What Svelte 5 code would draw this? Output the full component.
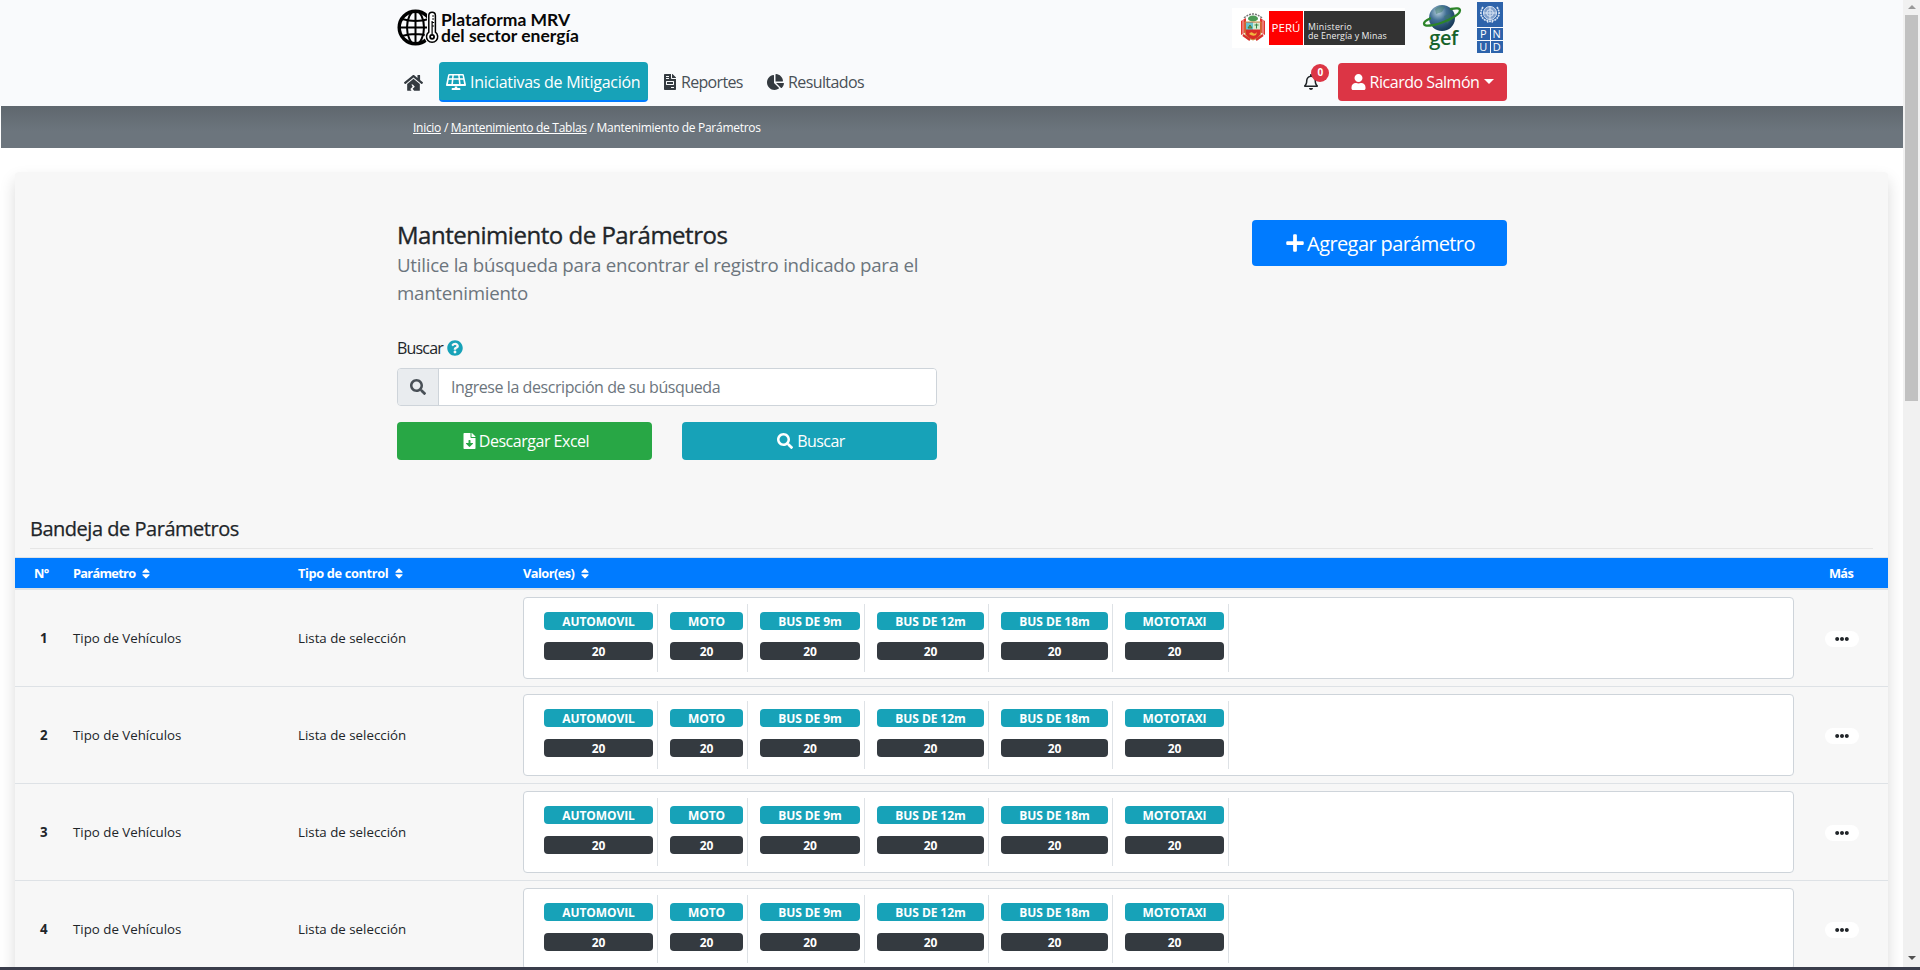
<script>
  const icons = {
    search: ['0 0 512 512', 'M505 442.7L405.3 343c-4.5-4.5-10.6-7-17-7H372c27.6-35.3 44-79.7 44-128C416 93.1 322.9 0 208 0S0 93.1 0 208s93.1 208 208 208c48.3 0 92.7-16.4 128-44v16.3c0 6.4 2.5 12.5 7 17l99.7 99.7c9.4 9.4 24.6 9.4 33.9 0l28.3-28.3c9.4-9.4 9.4-24.6.1-34zM208 336c-70.7 0-128-57.2-128-128 0-70.7 57.2-128 128-128 70.7 0 128 57.2 128 128 0 70.7-57.2 128-128 128z'],
    user: ['0 0 448 512', 'M224 256c70.7 0 128-57.3 128-128S294.7 0 224 0 96 57.3 96 128s57.3 128 128 128zm89.6 32h-16.7c-22.2 10.2-46.9 16-72.9 16s-50.6-5.8-72.9-16h-16.7C60.2 288 0 348.2 0 422.4V464c0 26.5 21.5 48 48 48h352c26.5 0 48-21.5 48-48v-41.6c0-74.2-60.2-134.4-134.4-134.4z'],
    plus: ['0 0 448 512', 'M416 208H272V64c0-17.67-14.33-32-32-32h-32c-17.67 0-32 14.33-32 32v144H32c-17.67 0-32 14.33-32 32v32c0 17.67 14.33 32 32 32h144v144c0 17.67 14.33 32 32 32h32c17.67 0 32-14.33 32-32V304h144c17.67 0 32-14.33 32-32v-32c0-17.67-14.33-32-32-32z'],
    sort: ['0 0 320 512', 'M41 288h238c21.4 0 32.1 25.9 17 41L177 448c-9.4 9.4-24.6 9.4-33.9 0L24 329c-15.1-15.1-4.4-41 17-41zm255-105L177 64c-9.4-9.4-24.6-9.4-33.9 0L24 183c-15.1 15.1-4.4 41 17 41h238c21.4 0 32.1-25.9 17-41z'],
    question: ['0 0 512 512', 'M504 256c0 136.997-111.043 248-248 248S8 392.997 8 256C8 119.083 119.043 8 256 8s248 111.083 248 248zM262.655 90c-54.497 0-89.255 22.957-116.549 63.758-3.536 5.286-2.353 12.415 2.715 16.258l34.699 26.31c5.205 3.947 12.621 3.008 16.665-2.122 17.864-22.658 30.113-35.797 57.303-35.797 20.429 0 45.698 13.148 45.698 32.958 0 14.976-12.363 22.667-32.534 33.976C247.128 238.528 216 254.941 216 296v4c0 6.627 5.373 12 12 12h56c6.627 0 12-5.373 12-12v-1.333c0-28.462 83.186-29.647 83.186-106.667 0-58.002-60.165-102-116.531-102zM256 338c-25.365 0-46 20.635-46 46 0 25.364 20.635 46 46 46s46-20.636 46-46c0-25.365-20.635-46-46-46z'],
    pie: ['0 0 544 512', 'M527.79 288H290.5l158.03 158.03c6.04 6.04 15.98 6.53 22.19.68 38.7-36.46 65.32-85.61 73.13-140.86 1.34-9.46-6.51-17.85-16.06-17.85zm-15.83-64.8C503.72 103.74 408.26 8.28 288.8.04 279.68-.59 272 7.1 272 16.24V240h223.77c9.14 0 16.82-7.68 16.19-16.8zM224 288V50.71c0-9.55-8.39-17.4-17.84-16.06C86.99 51.49-4.1 155.6.14 280.37 4.5 408.51 114.83 513.59 243.03 511.98c50.4-.63 96.97-16.87 135.26-44.03 7.9-5.6 8.42-17.23 1.57-24.08L224 288z'],
    bell: ['0 0 448 512', 'M439.39 362.29c-19.32-20.76-55.47-51.99-55.47-154.29 0-77.7-54.48-139.9-127.94-155.16V32c0-17.67-14.32-32-31.98-32s-31.98 14.33-31.98 32v20.84C118.56 68.1 64.08 130.3 64.08 208c0 102.3-36.15 133.53-55.47 154.29-6 6.45-8.66 14.16-8.61 21.71.11 16.4 12.98 32 32.1 32h383.8c19.12 0 32-15.6 32.1-32 .05-7.55-2.61-15.27-8.61-21.71zM67.53 368c21.22-27.97 44.42-74.33 44.53-159.42 0-.2-.06-.38-.06-.58 0-61.86 50.14-112 112-112s112 50.14 112 112c0 .2-.06.38-.06.58.11 85.1 23.31 131.46 44.53 159.42H67.53zM224 512c35.32 0 63.97-28.65 63.97-64H160.03c0 35.35 28.65 64 63.97 64z'],
    invoice: ['0 0 384 512', 'M288 256H96v64h192v-64zm89-151L279.1 7c-4.5-4.5-10.6-7-17-7H256v128h128v-6.100c0-6.300-2.500-12.400-7-16.900zm-153 31V0H24C10.700 0 0 10.700 0 24v464c0 13.300 10.700 24 24 24h336c13.300 0 24-10.700 24-24V160H248c-13.200 0-24-10.800-24-24zM64 72c0-4.420 3.580-8 8-8h80c4.420 0 8 3.580 8 8v16c0 4.420-3.580 8-8 8H72c-4.420 0-8-3.580-8-8V72zm0 64c0-4.420 3.580-8 8-8h80c4.420 0 8 3.580 8 8v16c0 4.420-3.580 8-8 8H72c-4.420 0-8-3.580-8-8v-16zm256 304c0 4.420-3.580 8-8 8h-80c-4.420 0-8-3.580-8-8v-16c0-4.420 3.580-8 8-8h80c4.420 0 8 3.580 8 8v16zm0-200v96c0 8.840-7.160 16-16 16H80c-8.840 0-16-7.160-16-16v-96c0-8.840 7.160-16 16-16h224c8.840 0 16 7.160 16 16z'],
    download: ['0 0 384 512', 'M224 136V0H24C10.700 0 0 10.700 0 24v464c0 13.300 10.700 24 24 24h336c13.300 0 24-10.700 24-24V160H248c-13.200 0-24-10.800-24-24zm76.450 211.360l-96.420 95.700c-6.650 6.610-17.390 6.610-24.040 0l-96.420-95.700C73.420 337.290 80.540 320 94.820 320H160v-80c0-8.840 7.160-16 16-16h32c8.840 0 16 7.160 16 16v80h65.180c14.280 0 21.400 17.290 11.270 27.360zM377 105L279.100 7c-4.500-4.500-10.600-7-17-7H256v128h128v-6.100c0-6.300-2.500-12.400-7-16.900z'],
    dots: ['0 0 512 512', 'M328 256c0 39.800-32.200 72-72 72s-72-32.200-72-72 32.200-72 72-72 72 32.200 72 72zm104-72c-39.800 0-72 32.200-72 72s32.200 72 72 72 72-32.200 72-72-32.200-72-72-72zm-352 0c-39.800 0-72 32.200-72 72s32.200 72 72 72 72-32.200 72-72-32.200-72-72-72z'],
    house: ['0 0 576 512', 'M280 149L96 300v188c0 9 7 16 16 16h116l-36-54 70-62-38-72h44l60 72-66 58 44 58h158c9 0 16-7 16-16V300L296 149c-5-4-11-4-16 0zM571 251l-83-69V44c0-7-5-12-12-12h-56c-7 0-12 5-12 12v72l-89-74c-18-14-44-14-62 0L5 251c-5 4-6 12-2 17l26 31c4 5 12 6 17 2L280 109c5-4 11-4 16 0l234 192c5 4 13 3 17-2l26-31c4-5 3-13-2-17z'],
    solar: ['0 0 640 512', 'M432 448h-72v-48h-80v48h-72c-18 0-28 10-28 32v16c0 9 7 16 16 16h248c9 0 16-7 16-16v-16c0-22-10-32-28-32zM573 28C569 12 555 0 539 0H101C85 0 71 12 67 28L1 340c-5 23 11 44 34 44h570c23 0 39-21 34-44L573 28zM390 48l10 88H240l10-88h140zM112 48h90l-10 88H94l18-88zM62 320l24-136h102l-16 136H62zm162 0l12-136h168l12 136H224zM438 48h90l18 88h-98l-10-88zm30 272l-16-136h102l24 136H468z']
  };
  const values = [
    ['AUTOMOVIL', 109], ['MOTO', 73], ['BUS DE 9m', 100],
    ['BUS DE 12m', 107], ['BUS DE 18m', 107], ['MOTOTAXI', 99]
  ];
  const rows = [1, 2, 3, 4];
</script>

{#snippet icon(name, cls = '')}
  <svg class="ic {name} {cls}" viewBox={icons[name][0]} aria-hidden="true"><path fill-rule="evenodd" d={icons[name][1]} /></svg>
{/snippet}

<div class="screen">
  <div class="view">
    <header>
      <div class="container brandrow">
        <div class="brand">
          <svg class="globe" viewBox="0 0 42 37" fill="none" stroke="#000">
            <circle cx="18.500" cy="18.500" r="16.300" stroke-width="3.400" />
            <ellipse cx="18.500" cy="18.500" rx="8.500" ry="16.500" stroke-width="2" />
            <path d="M18.500 2v33M2 18.500h30M5 10q13.500 4 27 0M5 27q13.500-4 27 0" stroke-width="2" />
            <path d="M31.500 6a3.800 3.800 0 0 1 7.600 0v16.500a6.300 6.300 0 1 1-7.600 0z" fill="#f9fafc" stroke="#f9fafc" stroke-width="3" />
            <path d="M31.800 6.500a3.300 3.300 0 0 1 6.600 0v16.700a5.600 5.600 0 1 1-6.600 0z" fill="#fff" stroke-width="1.500" />
            <path d="M35.100 12v13M35.100 7h2M35.100 10h2M35.100 13.500h2M35.100 17h2" stroke-width="1.200" />
            <circle cx="35.100" cy="27.800" r="2" stroke-width="1.800" />
          </svg>
          <div class="brandtext"><span>Plataforma MRV</span><span>del sector energía</span></div>
        </div>
        <div class="logos">
          <div class="peru">
            <svg class="crest" viewBox="0 0 26 30">
              <path d="M4 6Q13-2 22 6" fill="none" stroke="#777" stroke-width="1.500" stroke-dasharray="2 1" />
              <path d="M1 9l5-3v14l-5 3zM25 9l-5-3v14l5 3z" fill="#e3342f" />
              <path d="M3 8v15M23 8v15" stroke="#f6b9b4" stroke-width="1" />
              <ellipse cx="13" cy="6.500" rx="5" ry="3" fill="#4c9a55" />
              <path d="M5 10h16v10q0 5-8 8-8-3-8-8z" fill="#d92b28" stroke="#c8963c" />
              <path d="M6 10.500h7v7H6z" fill="#68c3cf" /><path d="M13 10.500h7v7h-7z" fill="#d5ecd0" />
              <path d="M8 16l2-3 2 3zM16.500 11.500v5M14.500 13h4" stroke="#388444" fill="#b9772d" />
              <path d="M9 22q2-3 4-1t4-1l-1 3q-3 2-7-1z" fill="#f0b63d" />
              <path d="M3 23l7 5M23 23l-7 5" stroke="#d5302c" stroke-width="2.200" />
            </svg>
            <div class="pe">PERÚ</div>
            <div class="min"><span>Ministerio</span><span>de Energía y Minas</span></div>
          </div>
          <div class="gef">
            <svg viewBox="0 0 40 30">
              <defs><radialGradient id="gg" cx=".35" cy=".28" r=".8"><stop offset="0" stop-color="#b8d1de" /><stop offset=".4" stop-color="#416f94" /><stop offset="1" stop-color="#12324f" /></radialGradient></defs>
              <circle cx="20" cy="15" r="13" fill="url(#gg)" />
              <path d="M13 6q5-5 10-2l-3 5-6 2zM22 13l6-2 2 5-5 5z" fill="#3b7867" opacity=".5" />
              <path d="M8 15.500C0 19 0 23.500 8 22.500 18 21.500 38 13 38 7.500 38 5 34 5 29 6" fill="none" stroke="#2c8429" stroke-width="2.300" stroke-linecap="round" />
            </svg>
            <span>gef</span>
          </div>
          <div class="pnud">
            <div class="un"><svg viewBox="0 0 26 24" fill="none" stroke="#dbe6f4" stroke-width="1"><circle cx="13" cy="11" r="6.500" fill="#7f9fcb" /><circle cx="13" cy="11" r="3.300" /><path d="M13 4.500v13M6.500 11h13" /><path d="M6 5q-5 8 2 13l8 2M20 5q5 8-2 13l-8 2" stroke-width="1.700" stroke-dasharray="2 .7" /></svg></div>
            <b>P</b><b>N</b><b>U</b><b>D</b>
          </div>
        </div>
      </div>
      <div class="container navrow">
        <nav>
          <a class="home" href="#top" aria-label="Inicio">{@render icon('house')}</a>
          <a class="active" href="#top">{@render icon('solar')}<span>Iniciativas de Mitigación</span></a>
          <a class="rep" href="#top">{@render icon('invoice')}<span>Reportes</span></a>
          <a class="res" href="#top">{@render icon('pie')}<span>Resultados</span></a>
        </nav>
        <div class="account">
          <div class="notif">{@render icon('bell')}<span class="count">0</span></div>
          <button class="userbtn">{@render icon('user')}<span>Ricardo Salmón</span><i></i></button>
        </div>
      </div>
    </header>

    <div class="crumbs"><div class="container"><a href="#top">Inicio</a> / <a href="#top">Mantenimiento de Tablas</a> / Mantenimiento de Parámetros</div></div>

    <main>
      <div class="container top">
        <div class="left">
          <h1>Mantenimiento de Parámetros</h1>
          <p>Utilice la búsqueda para encontrar el registro indicado para el<br />mantenimiento</p>
          <div class="label"><span>Buscar</span>{@render icon('question')}</div>
          <div class="group"><div class="addon">{@render icon('search')}</div><div class="field"><span>Ingrese la descripción de su búsqueda</span></div></div>
          <div class="btns">
            <button class="green">{@render icon('download')}<span>Descargar Excel</span></button>
            <button class="teal">{@render icon('search')}<span>Buscar</span></button>
          </div>
        </div>
        <button class="add">{@render icon('plus')}<span>Agregar parámetro</span></button>
      </div>

      <h2>Bandeja de Parámetros</h2>
      <div class="thead line">
        <span class="c">N°</span>
        <span class="p">Parámetro {@render icon('sort')}</span>
        <span class="p wide">Tipo de control {@render icon('sort')}</span>
        <span class="v">Valor(es) {@render icon('sort')}</span>
        <span class="m">Más</span>
      </div>
      {#each rows as n}
        <div class="row line">
          <b class="c">{n}</b>
          <span class="p">Tipo de Vehículos</span>
          <span class="p">Lista de selección</span>
          <div class="box">
            {#each values as [name, w]}
              <div class="val"><span class="badge" style="width:{w}px">{name}</span><span class="badge dark" style="width:{w}px">20</span></div>
            {/each}
          </div>
          <div class="m"><span class="pill">{@render icon('dots')}</span></div>
        </div>
      {/each}
    </main>
  </div>
  <div class="scroll"><i class="up"></i><div class="thumb"></div><i class="down"></i></div>
  <div class="strip"></div>
</div>

<style>
  :global(body) { overflow: hidden; background: #fff; }
  .screen { width: 1920px; height: 970px; display: grid; grid-template: 967px 3px / 1903px 17px; overflow: hidden; font-family: "Open Sans", "Noto Sans", sans-serif; font-size: 16px; color: #212529; letter-spacing: -0.03em; }
  .screen * { box-sizing: border-box; }
  span { white-space: nowrap; }
  .view { overflow: hidden; padding-left: 1px; }
  .strip { grid-column: 1 / 3; background: #3a3d4b; }
  .ic { fill: currentColor; display: block; flex: none; }
  a { color: inherit; text-decoration: none; }
  button { font: inherit; letter-spacing: inherit; color: #fff; border: 0; border-radius: 4px; padding: 0; display: flex; align-items: center; justify-content: center; }
  .container { width: 1110px; margin-left: 396px; }
  header { height: 106px; background: #f9fafc; margin-left: -1px; padding-left: 1px; }
  .brandrow { height: 62px; display: flex; justify-content: space-between; }
  .brand { display: flex; padding-top: 9px; }
  .globe { width: 42px; height: 37px; }
  .brandtext { font: 700 17.500px/16px Lato, sans-serif; letter-spacing: 0; color: #080808; display: flex; flex-direction: column; padding: 3px 0 0 2px; }
  .logos { display: flex; }
  .peru { display: flex; background: #fff; margin-top: 8px; height: 40px; padding: 3px 0 3px 9px; }
  .crest { width: 26px; height: 30px; margin: 1px 3px 0 -1px; }
  .pe { width: 34px; height: 34px; background: #f00; color: #fff; font-size: 11.500px; line-height: 34px; text-align: center; letter-spacing: 0; margin-right: 1px; }
  .min { width: 101px; height: 34px; background: #333; color: #eee; font-size: 8.800px; line-height: 9px; letter-spacing: .1px; display: flex; flex-direction: column; padding: 12px 0 0 4px; }
  .min span:first-child { letter-spacing: .3px; }
  .gef { width: 40px; margin-left: 17px; display: flex; flex-direction: column; align-items: center; padding-top: 3px; }
  .gef svg { width: 40px; height: 30px; }
  .gef span { font: 600 20px/22px "Open Sans", sans-serif; letter-spacing: -0.5px; color: #17622b; margin: -6px 0 0 3px; }
  .pnud { margin: 2px 4px 0 15px; width: 26px; height: 51px; display: grid; grid-template: 25px 12px 12px / 12.500px 12.500px; gap: 1px; }
  .un { grid-column: 1 / 3; background: #2d63ab; }
  .pnud b { background: #2d63ab; color: #fff; font: 400 11px/11px "Open Sans", sans-serif; text-align: center; letter-spacing: 0; }
  .navrow { display: flex; justify-content: space-between; height: 40px; }
  nav { display: flex; color: #343a40; }
  nav a { display: flex; align-items: center; height: 40px; }
  .home { width: 42px; padding-left: 7px; }
  .house { width: 19px; height: 17px; }
  .active { width: 209px; background: #17a2b8; color: #fff; border-bottom: 2px solid #007bff; border-radius: 4px; padding: 2px 0 0 7px; letter-spacing: -0.27px; }
  .solar { width: 20px; height: 16px; margin: 0 4px 1px 0; }
  .rep { padding-left: 16px; width: 119px; color: #495057; letter-spacing: -0.68px; }
  .invoice { width: 12px; height: 16px; margin-right: 5px; color: #343a40; }
  .res { color: #495057; letter-spacing: -0.6px; }
  .pie { width: 17px; height: 16px; margin-right: 4px; color: #343a40; }
  .account { display: flex; padding-top: 1px; }
  .notif { position: relative; width: 34px; padding-top: 11px; }
  .bell { width: 14px; height: 16px; }
  .count { position: absolute; left: 7px; top: 1px; width: 18px; height: 18px; border-radius: 50%; background: #dc3545; color: #fff; font-size: 10px; font-weight: 700; line-height: 17px; text-align: center; }
  .userbtn { width: 169px; height: 38px; background: #dc3545; }
  .user { width: 15px; height: 16px; margin-right: 4px; }
  .userbtn i { border: 5px solid transparent; border-top-color: #fff; border-bottom: 0; margin-left: 5px; margin-bottom: 2px; }
  .crumbs { height: 42px; background: linear-gradient(#5f676e, #6c757d 60%); color: #fff; font-size: 12px; line-height: 43px; letter-spacing: -0.28px; }
  .crumbs .container { padding-left: 16px; }
  .crumbs a { text-decoration: underline; }
  main { margin: 24px 0 0 14px; width: 1873px; height: 860px; background: #f7f7f7; border-radius: 4px; box-shadow: 0 8px 16px rgba(0, 0, 0, .15); }
  .top { display: flex; justify-content: space-between; margin-left: 382px; padding-top: 48px; height: 336px; }
  .left { width: 540px; }
  h1 { margin: 0; font-size: 24px; font-weight: 500; line-height: 29px; letter-spacing: -0.48px; -webkit-text-stroke: .35px currentColor; }
  p { margin: 2px 0 0; font-size: 18.700px; line-height: 28px; color: #6c757d; letter-spacing: -0.26px; }
  .label { display: flex; align-items: center; gap: 4px; height: 24px; margin-top: 29px; letter-spacing: -0.8px; }
  .question { width: 16px; height: 16px; color: #17a2b8; }
  .group { display: flex; height: 38px; border: 1px solid #ced4da; border-radius: 4px; margin-top: 8px; overflow: hidden; }
  .addon { width: 41px; background: #e9ecef; border-right: 1px solid #ced4da; display: grid; place-items: center; color: #495057; }
  .search { width: 16px; height: 16px; }
  .field { flex: 1; background: #fff; color: #6c757d; padding-left: 12px; line-height: 36px; letter-spacing: -0.43px; }
  .btns { display: flex; justify-content: space-between; margin-top: 16px; }
  .btns button { width: 255px; height: 38px; }
  .green { background: #28a745; padding-left: 3px; } .teal { background: #17a2b8; padding-left: 3px; }
  .download { width: 13px; height: 16px; margin-right: 3px; } .teal .search { margin-right: 4px; }
  .teal span { letter-spacing: -0.6px; }
  .add { width: 255px; height: 46px; background: #007bff; font-size: 20px; padding-left: 2px; letter-spacing: -0.6px; }
  .plus { width: 18px; height: 20px; margin-right: 3px; }
  h2 { margin: 0 15px 8px; font-size: 20px; font-weight: 500; line-height: 24px; height: 41px; padding-top: 9px; border-bottom: 1px solid #e6e6e6; letter-spacing: -0.48px; -webkit-text-stroke: .25px currentColor; }
  .line { display: grid; grid-template-columns: 58px 225px 225px 1271px 1fr; align-items: center; font-size: 13.300px; letter-spacing: 0; }
  .thead { height: 33px; border-top: 1px solid #dee2e6; background: #007bff; color: #fff; font-size: 12.800px; font-weight: 700; letter-spacing: -0.7px; border-bottom: 2px solid #dee2e6; }
  .thead .wide { letter-spacing: -0.36px; }
  .thead .v { letter-spacing: -0.54px; }
  .thead span { display: flex; align-items: center; }
  .thead .c { padding-left: 19px; }
  .sort { width: 8px; height: 13px; margin-left: 7px; }
  .m { display: flex; padding-left: 35px; }
  .pill { margin: 1px 0 0 -4px; width: 34px; height: 16px; border-radius: 8px; background: #fff; display: grid; place-items: center; color: #212529; }
  .dots { width: 14px; height: 14px; }
  .row { height: 97px; border-bottom: 1px solid #dee2e6; }
  .row .c { padding-left: 25px; }
  .box { height: 82px; background: #fff; border: 1px solid #ced4da; border-radius: 4px; display: flex; padding: 6px 0 6px 8px; }
  .val { border-right: 1px solid #dee2e6; padding: 8px 4px 0 12px; display: flex; flex-direction: column; gap: 12px; }
  .badge { height: 18px; border-radius: 4px; background: #17a2b8; color: #fff; font-size: 12px; font-weight: 700; line-height: 19px; letter-spacing: -0.08px; text-align: center; }
  .dark { background: #343a40; }
  .scroll { background: #f1f1f1; display: flex; flex-direction: column; align-items: center; padding: 5px 0 7px; }
  .scroll i { border: 4px solid transparent; }
  .up { border-bottom-color: #999 !important; border-top: 0 !important; }
  .thumb { width: 13px; height: 386px; background: #c1c1c1; margin: 6px 0 auto; }
  .down { border-top-color: #505050 !important; border-bottom: 0 !important; }
</style>
